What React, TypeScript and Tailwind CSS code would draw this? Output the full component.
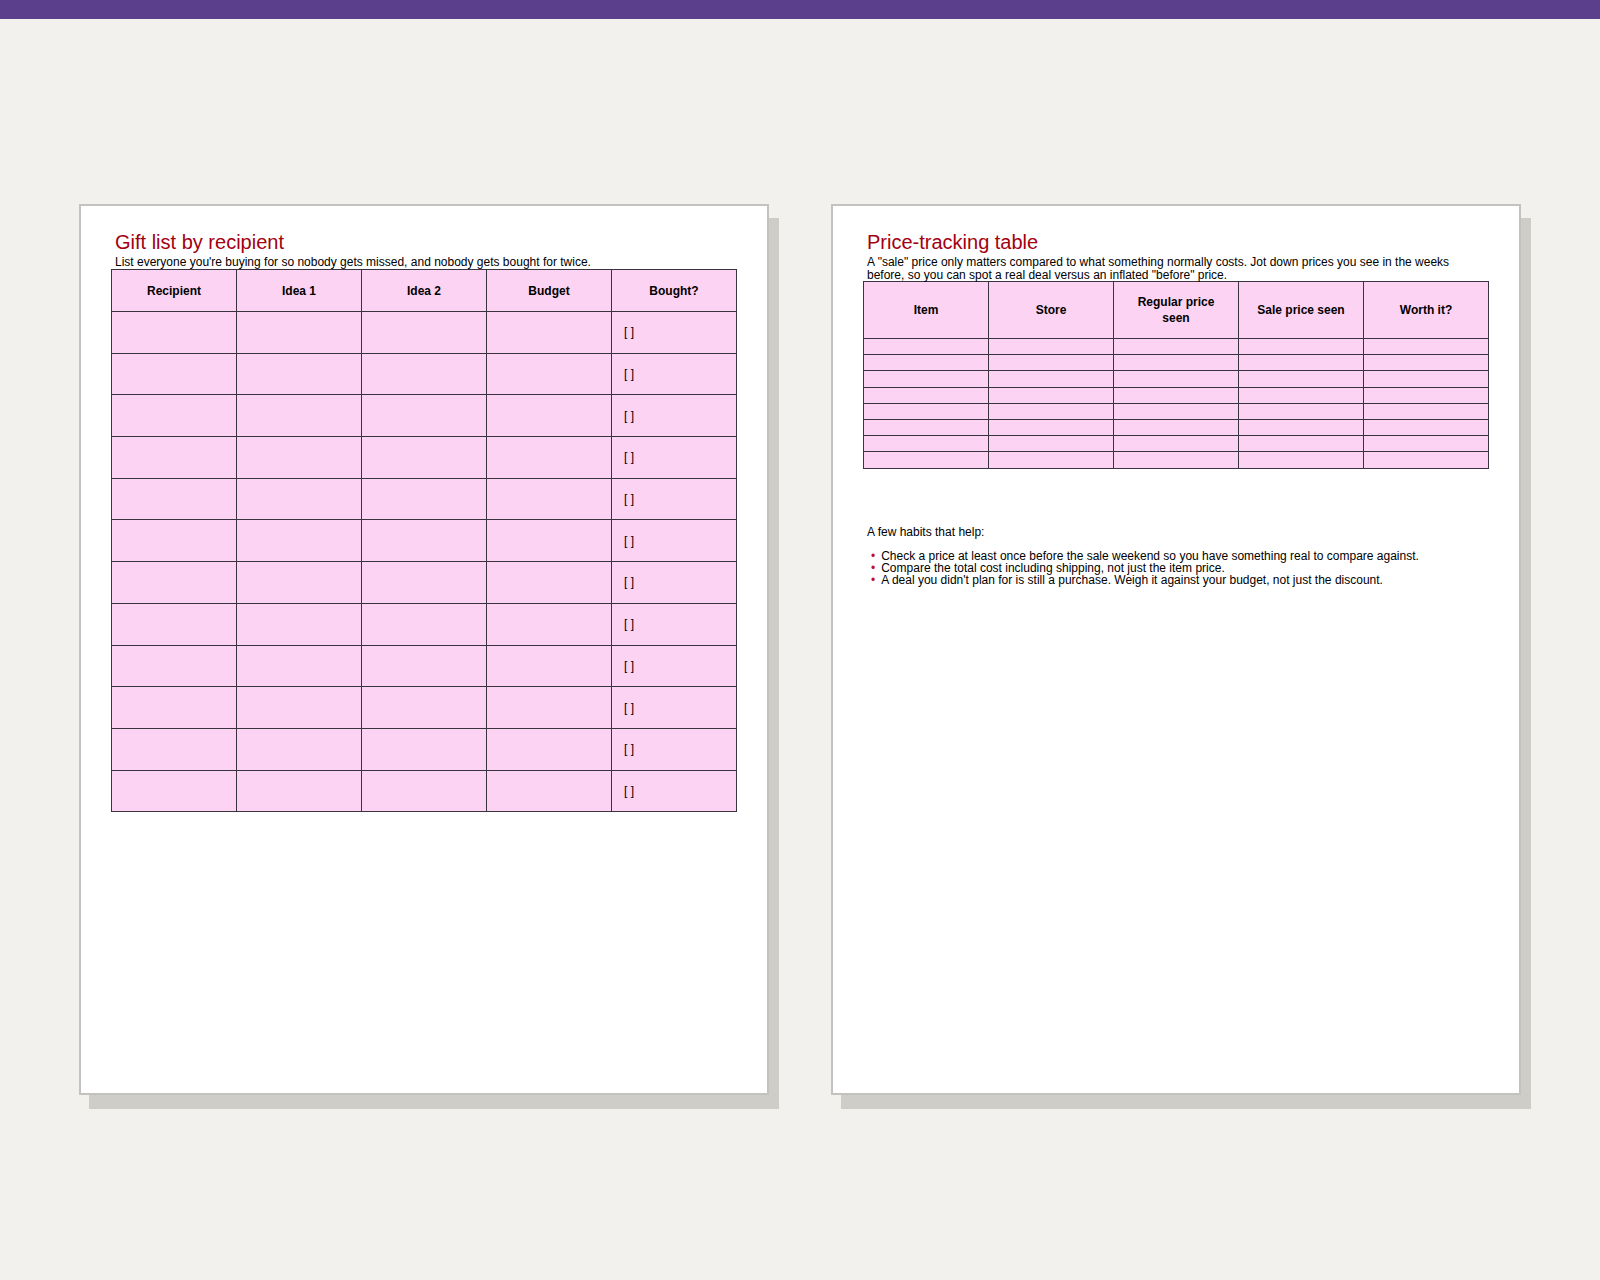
const font = { fontFamily: '"Liberation Sans", Arial, sans-serif' };

function Page({ children }: { children: React.ReactNode }) {
  return (
    <div className="relative w-[690px] h-[891px]">
      <div className="absolute left-[10px] top-[14px] w-[690px] h-[891px] bg-[#cfcdc8]" />
      <div className="relative w-full h-full bg-white border-2 border-[#c4c2be] px-[30px] pt-[24px]">
        {children}
      </div>
    </div>
  );
}

function Sheet({
  cols,
  rows,
  headH,
  rowH,
  mark,
}: {
  cols: string[];
  rows: number;
  headH: string;
  rowH: string;
  mark?: string;
}) {
  return (
    <table className="w-full border-collapse table-fixed text-[12px] text-black">
      <thead>
        <tr className={headH}>
          {cols.map((c) => (
            <th key={c} className="border border-[#3a3340] bg-[#fdd3f4] font-bold px-4 leading-[16px]">
              {c}
            </th>
          ))}
        </tr>
      </thead>
      <tbody>
        {Array.from({ length: rows }).map((_, i) => (
          <tr key={i} className={rowH}>
            {cols.map((c, j) => (
              <td key={c} className="border border-[#3a3340] bg-[#fdd3f4] px-3 p-0">
                {mark && j === cols.length - 1 ? mark : ""}
              </td>
            ))}
          </tr>
        ))}
      </tbody>
    </table>
  );
}

export default function App() {
  return (
    <div className="min-h-[1280px] w-[1600px] bg-[#f2f1ed]" style={font}>
      <div className="h-[19px] bg-[#5c3f8c]" />
      <div className="flex justify-center gap-[62px] pt-[185px]">
        <Page>
          <div className="pl-[4px]">
            <h1 className="text-[20px] leading-[24px] text-[#a30010]">Gift list by recipient</h1>
            <p className="text-[12px] leading-[14px] mt-[1px] text-black">
              List everyone you're buying for so nobody gets missed, and nobody gets bought for twice.
            </p>
          </div>
          <Sheet
            cols={["Recipient", "Idea 1", "Idea 2", "Budget", "Bought?"]}
            rows={12}
            headH="h-[42px]"
            rowH="h-[41.7px]"
            mark="[ ]"
          />
        </Page>
        <Page>
          <div className="pl-[4px]">
            <h1 className="text-[20px] leading-[24px] text-[#a30010]">Price-tracking table</h1>
            <p className="text-[12px] leading-[12.5px] mt-[2px] text-black">
              A "sale" price only matters compared to what something normally costs. Jot down prices you see in the weeks before, so you can spot a real deal versus an inflated "before" price.
            </p>
          </div>
          <Sheet
            cols={["Item", "Store", "Regular price seen", "Sale price seen", "Worth it?"]}
            rows={8}
            headH="h-[57px]"
            rowH="h-[16.2px]"
          />
          <div className="pl-[4px] text-[12px] text-black">
            <p className="mt-[56px] leading-[14px]">A few habits that help:</p>
            <ul className="mt-[11px] leading-[12px]">
              {[
                "Check a price at least once before the sale weekend so you have something real to compare against.",
                "Compare the total cost including shipping, not just the item price.",
                "A deal you didn't plan for is still a purchase. Weigh it against your budget, not just the discount.",
              ].map((t) => (
                <li key={t} className="flex gap-[6px] pl-[4px]">
                  <span className="text-[#c0102a]">•</span>
                  <span>{t}</span>
                </li>
              ))}
            </ul>
          </div>
        </Page>
      </div>
    </div>
  );
}
